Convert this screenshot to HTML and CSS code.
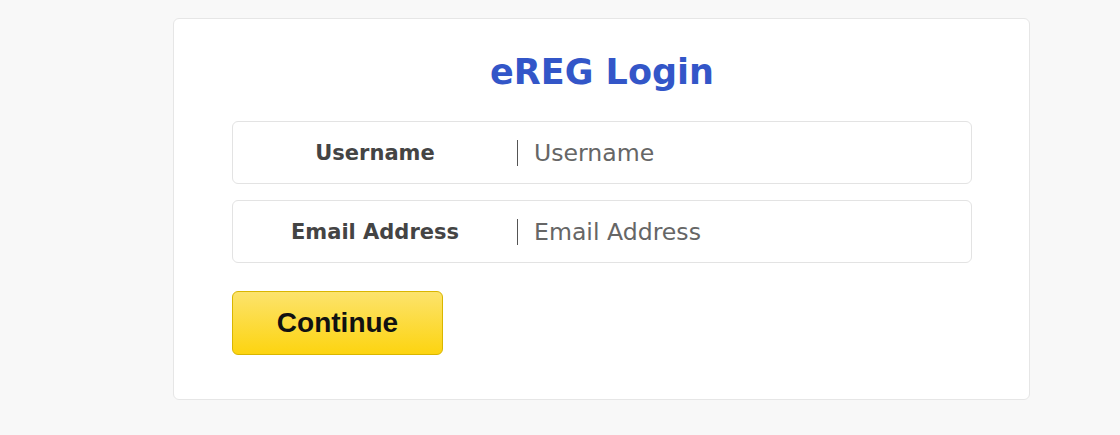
FILE: index.html
```html
<!DOCTYPE html>
<html>
<head>
<meta charset="utf-8">
<link rel="stylesheet" href="styles.css">
</head>
<body>
<div class="page">
  <div class="card">
    <h1 class="title">eREG Login</h1>
    <div class="field">
      <label class="field-label" for="u">Username</label>
      <input class="field-input" id="u" type="text" placeholder="Username">
    </div>
    <div class="field">
      <label class="field-label" for="e">Email Address</label>
      <input class="field-input" id="e" type="text" placeholder="Email Address">
    </div>
    <button class="btn" type="button">Continue</button>
  </div>
</div>
</body>
</html>
```
FILE: styles.css
```css
html, body {
  margin: 0;
  padding: 0;
  background: #f8f8f8;
}
.page {
  padding: 18px 0 0 173px;
}
.card {
  box-sizing: border-box;
  width: 857px;
  height: 382px;
  background: #fff;
  border: 1px solid #e6e6e6;
  border-radius: 6px;
  padding: 0 57px 0 58px;
  display: flex;
  flex-direction: column;
}
.title {
  margin: 32px 0 0;
  height: 42px;
  line-height: 42px;
  text-align: center;
  font-family: "DejaVu Sans", Verdana, sans-serif;
  font-weight: bold;
  font-size: 35px;
  color: #3356c8;
}
.field {
  box-sizing: border-box;
  display: flex;
  align-items: center;
  height: 63px;
  border: 1px solid #e3e3e3;
  border-radius: 6px;
  margin-top: 28px;
}
.field + .field {
  margin-top: 16px;
}
.field-label {
  width: 284px;
  text-align: center;
  font-family: "DejaVu Sans", Verdana, sans-serif;
  font-weight: bold;
  font-size: 21px;
  color: #444;
}
.field-input {
  flex: 1;
  border: 0;
  border-left: 1px solid #555;
  height: 26px;
  padding: 0 0 0 16px;
  margin: 0 8px 0 0;
  outline: none;
  background: transparent;
  font-family: "DejaVu Sans", Verdana, sans-serif;
  font-size: 23.6px;
  color: #333;
}
.field-input::placeholder {
  color: #666;
}
.btn {
  align-self: flex-start;
  margin-top: 28px;
  width: 211px;
  height: 64px;
  border: 1px solid #d9b600;
  border-radius: 6px;
  background: linear-gradient(#fce36c, #fdd410);
  font-family: "Liberation Sans", Arial, sans-serif;
  font-weight: bold;
  font-size: 28px;
  color: #111;
  padding: 0;
}
```
